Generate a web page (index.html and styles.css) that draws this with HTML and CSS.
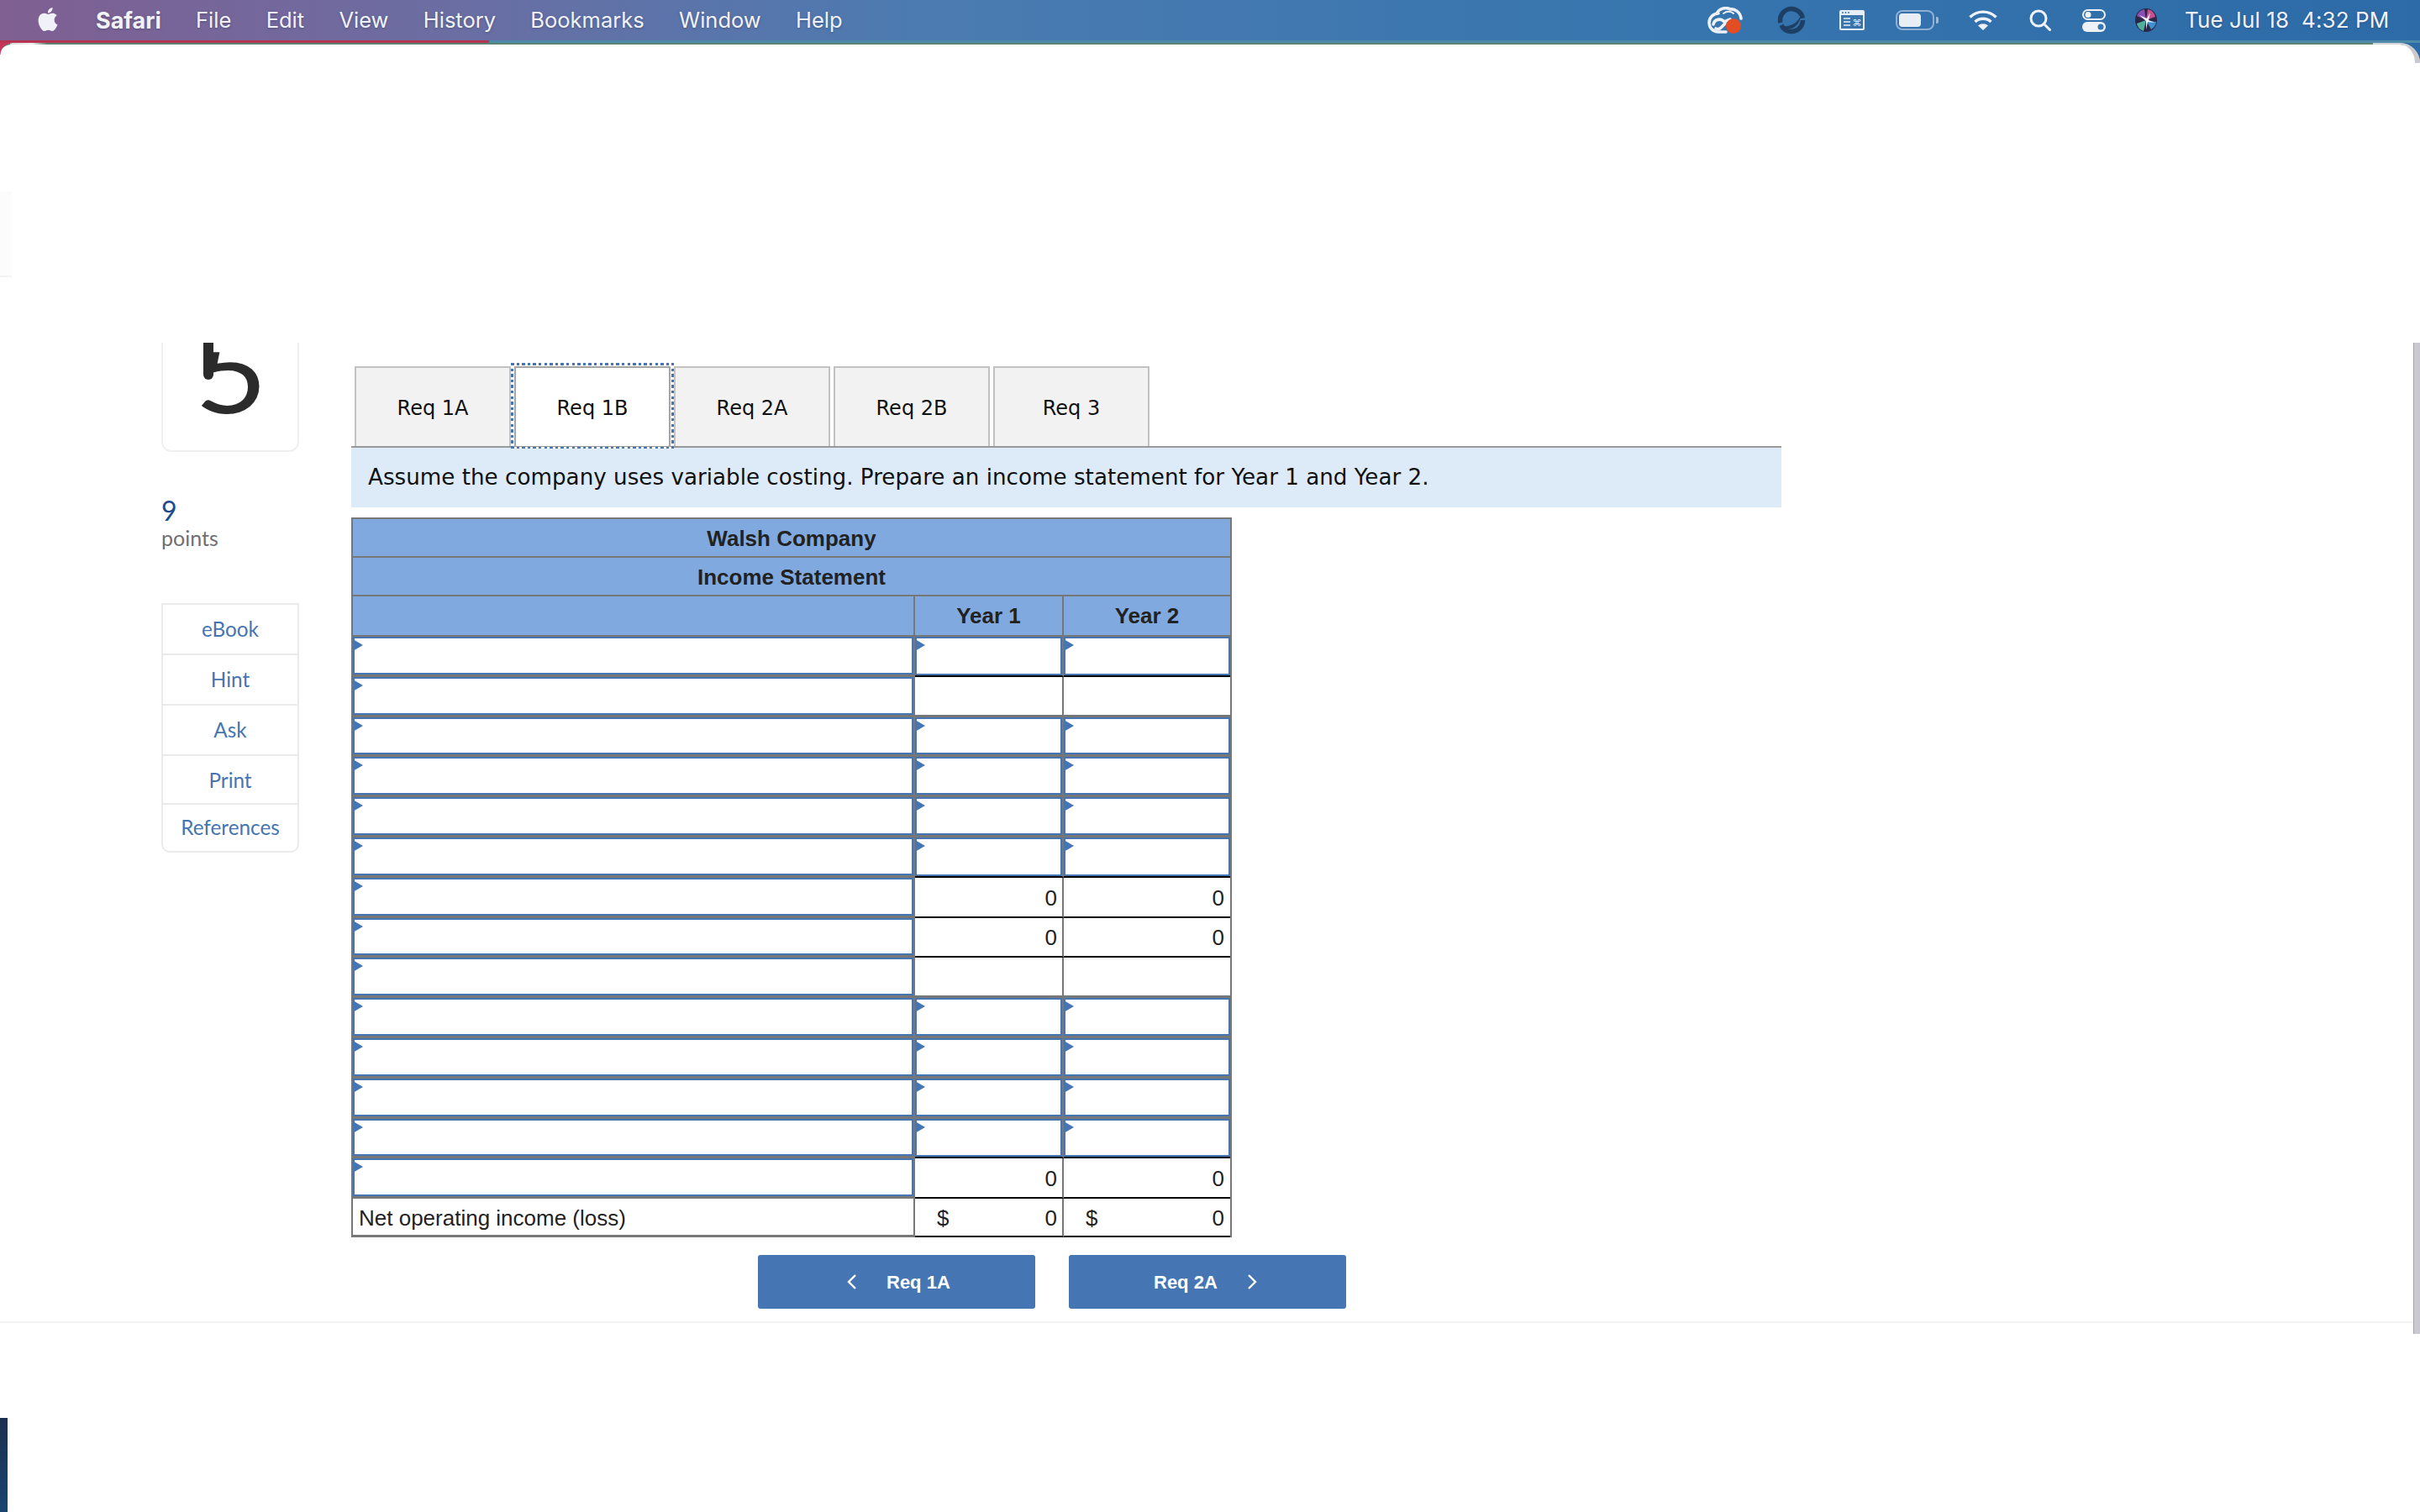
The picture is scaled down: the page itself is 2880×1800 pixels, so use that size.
FILE: index.html
```html
<!DOCTYPE html>
<html lang="en">
<head>
<meta charset="utf-8">
<title>Walsh Company</title>
<link rel="stylesheet" href="styles.css">
</head>
<body>
<div class="desktop">
  <header class="menubar">
    <svg class="apple" viewBox="0 0 24 24"><path d="M12.152 6.896c-.948 0-2.415-1.078-3.96-1.04-2.04.027-3.91 1.183-4.961 3.014-2.117 3.675-.546 9.103 1.519 12.09 1.013 1.454 2.208 3.09 3.792 3.039 1.52-.065 2.09-.987 3.935-.987 1.831 0 2.35.987 3.96.948 1.637-.026 2.676-1.48 3.676-2.948 1.156-1.688 1.636-3.325 1.662-3.415-.039-.013-3.182-1.221-3.22-4.857-.026-3.04 2.48-4.494 2.597-4.559-1.429-2.09-3.623-2.324-4.39-2.376-2-.156-3.675 1.09-4.61 1.09zM15.53 3.83c.843-1.012 1.4-2.427 1.245-3.83-1.207.052-2.662.805-3.532 1.818-.78.896-1.454 2.338-1.273 3.714 1.338.104 2.715-.688 3.559-1.701"/></svg>
    <nav class="menus">
      <span class="menu-app">Safari</span>
      <span>File</span>
      <span>Edit</span>
      <span>View</span>
      <span>History</span>
      <span>Bookmarks</span>
      <span>Window</span>
      <span>Help</span>
    </nav>
    <div class="status">
      <svg class="st-cc" viewBox="0 0 42 34">
        <path d="M13 8a10 10 0 1 0 0 22h9" class="cc"/>
        <path d="M11 8C14 2 22 0 27 3c5-1 12 3 13 11" class="cc"/>
        <path d="M19 8c4-3 9-3 12 0" class="cc-thin"/>
        <path d="M7 21c1-6 9-8 13-3l7-3" class="cc"/>
        <path d="M10 26c2 1 4 1 6-1l5-5" class="cc"/>
        <circle cx="31" cy="23" r="9" class="cc-dot"/>
      </svg>
      <svg class="st-ring" viewBox="0 0 36 36">
        <circle cx="18" cy="18" r="13.5" class="ring"/>
        <path d="M8 26c8 5 18 0 20-11-3 7-11 11-20 11z" class="ring-in"/>
      </svg>
      <svg class="st-win" viewBox="0 0 30 24">
        <rect x="0" y="0" width="30" height="24" rx="2" class="win-bg"/>
        <rect x="2" y="6" width="26" height="16" class="win-in"/>
        <circle cx="4" cy="3" r="1" class="win-dot"/><circle cx="7.5" cy="3" r="1" class="win-dot"/><circle cx="11" cy="3" r="1" class="win-dot"/>
        <path d="M5 10h8M5 14h8M5 18h8" class="win-line"/>
        <text x="21" y="18.5" class="win-cmd">⌘</text>
      </svg>
      <div class="battery"><span class="battery-body"><span class="battery-fill"></span></span><span class="battery-nub"></span></div>
      <svg class="st-wifi" viewBox="0 0 34 25">
        <path d="M1.5 9.5a22 22 0 0 1 31 0" class="wf"/>
        <path d="M7.5 15a14 14 0 0 1 19 0" class="wf"/>
        <path d="M17 25l-6-5.5a9 9 0 0 1 12 0z" class="wf-fill"/>
      </svg>
      <svg class="st-search" viewBox="0 0 26 26"><circle cx="11" cy="11" r="9" class="w3"/><path d="M17.5 17.5l7 7" class="w3"/></svg>
      <svg class="st-ctrl" viewBox="0 0 28 28">
        <rect x="1" y="1" width="26" height="11" rx="5.5" class="w2"/><circle cx="7" cy="6.5" r="3.5" class="wfill"/>
        <rect x="0" y="15" width="28" height="12" rx="6" class="wfill"/><circle cx="22" cy="21" r="3.5" class="ctrl-knob"/>
      </svg>
      <svg class="st-siri" viewBox="0 0 26 28">
        <ellipse cx="13" cy="14" rx="13" ry="14" class="siri-base"/>
        <path d="M13 14L2 9a12 12 0 0 1 9-8z" class="siri-purple"/>
        <path d="M13 14L15 1a12 12 0 0 1 9 9z" class="siri-pink"/>
        <path d="M13 14l12 2a12 12 0 0 1-6 9z" class="siri-blue"/>
        <path d="M13 14l-3 13a12 12 0 0 1-8-9z" class="siri-green"/>
        <path d="M13 15L5 8l9 4 4-7-2 9 7 3-8-1-2 9z" class="siri-star"/>
      </svg>
      <span class="clock">Tue Jul 18&nbsp;&nbsp;4:32 PM</span>
    </div>
  </header>

  <div class="edge">
    <span class="edge-red"></span><span class="edge-teal"></span>
  </div>

  <div class="window">
    <span class="ghost-box"></span>
    <span class="dark-strip"></span>
    <span class="scrollbar"></span>
    <span class="corner-right"></span>
    <div class="content">
      <aside class="side">
        <div class="qnum"><span class="qnum-digit">5</span></div>
        <div class="score">9</div>
        <div class="score-label">points</div>
        <ul class="tools">
          <li class="tool-a">eBook</li>
          <li class="tool-a">Hint</li>
          <li class="tool-a">Ask</li>
          <li class="tool-b">Print</li>
          <li class="tool-c">References</li>
        </ul>
      </aside>
      <main class="work">
        <div class="tabs">
          <button class="tab">Req 1A</button>
          <button class="tab tab-active">Req 1B</button>
          <button class="tab">Req 2A</button>
          <button class="tab">Req 2B</button>
          <button class="tab">Req 3</button>
        </div>
        <p class="prompt">Assume the company uses variable costing. Prepare an income statement for Year 1 and Year 2.</p>
        <div class="sheet">
          <div class="c head span3">Walsh Company</div>
          <div class="c head span3">Income Statement</div>
          <div class="c head"></div><div class="c head">Year 1</div><div class="c head">Year 2</div>

          <div class="c in"><i></i></div><div class="c in black"><i></i></div><div class="c in black"><i></i></div>
          <div class="c in"><i></i></div><div class="c"></div><div class="c"></div>
          <div class="c in"><i></i></div><div class="c in"><i></i></div><div class="c in"><i></i></div>
          <div class="c in"><i></i></div><div class="c in"><i></i></div><div class="c in"><i></i></div>
          <div class="c in"><i></i></div><div class="c in"><i></i></div><div class="c in"><i></i></div>
          <div class="c in"><i></i></div><div class="c in black"><i></i></div><div class="c in black"><i></i></div>
          <div class="c in"><i></i></div><div class="c num black">0</div><div class="c num black">0</div>
          <div class="c in"><i></i></div><div class="c num black">0</div><div class="c num black">0</div>
          <div class="c in"><i></i></div><div class="c"></div><div class="c"></div>
          <div class="c in"><i></i></div><div class="c in"><i></i></div><div class="c in"><i></i></div>
          <div class="c in"><i></i></div><div class="c in"><i></i></div><div class="c in"><i></i></div>
          <div class="c in"><i></i></div><div class="c in"><i></i></div><div class="c in"><i></i></div>
          <div class="c in"><i></i></div><div class="c in black"><i></i></div><div class="c in black"><i></i></div>
          <div class="c in"><i></i></div><div class="c num black">0</div><div class="c num black">0</div>
          <div class="c label">Net operating income (loss)</div>
          <div class="c money black"><span>$</span><span>0</span></div>
          <div class="c money black"><span>$</span><span>0</span></div>
        </div>
        <div class="pager">
          <button class="pg pg-prev"><svg class="chev" viewBox="0 0 12 18"><path d="M10 1L2 9l8 8"/></svg><span>Req 1A</span></button>
          <button class="pg pg-next"><span>Req 2A</span><svg class="chev" viewBox="0 0 12 18"><path d="M2 1l8 8-8 8"/></svg></button>
        </div>
      </main>
    </div>
    <div class="footline"></div>
  </div>
</div>
</body>
</html>
```
FILE: styles.css
```css
* { box-sizing: border-box; }
html, body { margin: 0; padding: 0; }
body { width: 2880px; height: 1800px; overflow: hidden; background: #fff; }

.desktop {
  width: 2880px; height: 1800px;
  display: flex; flex-direction: column;
  background: linear-gradient(90deg, #805f92 0, #6a6ea3 550px, #4b7bb1 1100px, #3675ae 2000px, #2d6ba8 2880px);
}

/* menu bar */
.menubar {
  flex: none; height: 48px; display: flex; align-items: center;
  color: #f1f2f7; font: 400 26px/1 "Inter", "Liberation Sans", sans-serif;
  text-shadow: 0 1px 3px rgba(30, 40, 70, .35);
}
.apple { width: 28px; height: 32px; margin: -2px 0 0 43px; fill: #f1f2f7; }
.menus { display: flex; gap: 41.3px; margin-left: 43px; font-size: 25.5px; }
.menu-app { font-weight: 700; font-size: 27px; }
.status { margin-left: auto; display: flex; align-items: center; height: 48px; position: relative; width: 860px; }
.status svg, .battery { position: absolute; }
.clock { position: absolute; left: 580px; top: 11px; font-size: 26px; letter-spacing: .1px; white-space: nowrap; }
.w3 { fill: none; stroke: #eef1f7; stroke-width: 3; stroke-linecap: round; }
.w2 { fill: none; stroke: #eef1f7; stroke-width: 2; }
.wfill { fill: #eef1f7; }
.cc { fill: none; stroke: #eef1f7; stroke-width: 3.6; stroke-linecap: round; }
.cc-thin { fill: none; stroke: #eef1f7; stroke-width: 2; stroke-linecap: round; }
.cc-dot { fill: #e34d23; }
.st-cc { left: 12px; top: 8px; width: 42px; height: 34px; }
.st-ring { left: 94px; top: 6px; width: 36px; height: 36px; }
.ring { fill: none; stroke: #1d3f63; stroke-width: 5.5; stroke-dasharray: 36 3 43 3; }
.ring-in { fill: #1d3f63; stroke: #1d3f63; stroke-width: 1; }
.st-win { left: 169px; top: 12px; width: 30px; height: 24px; }
.win-bg { fill: #e8eef6; }
.win-in { fill: #3a76ae; }
.win-dot { fill: #3a76ae; }
.win-line { stroke: #e8eef6; stroke-width: 1.6; }
.win-cmd { fill: #e8eef6; font: 11px "DejaVu Sans", sans-serif; text-anchor: middle; }
.battery { left: 236px; top: 12px; display: flex; align-items: center; }
.battery-body { width: 46px; height: 24px; border: 2px solid #8fb0d4; border-radius: 8px; padding: 2px; display: block; }
.battery-fill { display: block; width: 26px; height: 100%; background: #e9eef5; border-radius: 4px; }
.battery-nub { width: 3px; height: 8px; margin-left: 2px; background: #9db9d8; border-radius: 0 2px 2px 0; }
.st-wifi { left: 323px; top: 11px; width: 34px; height: 25px; }
.wf { fill: none; stroke: #eef1f7; stroke-width: 3.4; }
.wf-fill { fill: #eef1f7; }
.st-search { left: 395px; top: 11px; width: 26px; height: 26px; }
.st-ctrl { left: 458px; top: 11px; width: 28px; height: 28px; }
.ctrl-knob { fill: #3a76ae; }
.st-siri { left: 521px; top: 10px; width: 26px; height: 28px; }
.siri-base { fill: #2a2748; }
.siri-purple { fill: #8a4fb0; }
.siri-pink { fill: #c9508f; }
.siri-blue { fill: #3f8fd0; }
.siri-green { fill: #4fb0a0; }
.siri-star { fill: #f2f4ff; }

/* window edge under the menu bar */
.edge { flex: none; height: 3px; display: flex; }
.edge-red { width: 582px; background: #b5344f; }
.edge-teal { flex: 1; background: #4c8aa8; }

.window {
  flex: 1; position: relative;
  background: #fff;
  border-top: 2px solid #5c8272;
  border-radius: 14px 24px 0 0;
  padding-top: 355px;
  display: flex; flex-direction: column;
}
.window::before {
  content: ""; position: absolute; left: 12px; top: -2px; width: 44px; height: 2px;
  background: linear-gradient(90deg, #d8d8dc, #eeeeee 60%, #5c8272);
}
.window::after {
  content: ""; position: absolute; left: 0; top: -2px; width: 14px; height: 14px;
  background: radial-gradient(circle at 100% 100%, transparent 13px, #c9345a 14px);
}
.corner-right {
  position: absolute; right: 0; top: -2px; width: 56px; height: 24px;
  border-top: 2px solid #d4d4d8; border-right: 6px solid #c9c9cf;
  border-radius: 0 24px 0 0;
}
.ghost-box { position: absolute; left: 0; top: 175px; width: 14px; height: 102px; background: #fcfcfc; border-bottom: 2px solid #f3f3f3; }
.dark-strip { position: absolute; left: 0; bottom: 0; width: 9px; height: 112px; background: linear-gradient(180deg, #1a2f4f, #1a4470); }
.scrollbar { position: absolute; right: 0; top: 355px; width: 8px; height: 1180px; background: #c9c9cf; border-left: 1px solid #a3a3a8; }

.content { display: flex; padding-left: 192px; height: 1165px; flex: none; }
.footline { flex: none; height: 2px; background: #f2f2f2; margin-right: 8px; }

/* sidebar */
.side { width: 164px; flex: none; font-family: "Lato", "Liberation Sans", sans-serif; }
.qnum {
  position: relative; height: 130px; overflow: hidden;
  border: 2px solid #f0f0f0; border-top: 0; border-radius: 0 0 12px 12px;
  display: flex; justify-content: center; align-items: flex-end;
}
.qnum-digit {
  font: 400 150px/150px "Lato", sans-serif; color: #2b2b2b;
  margin: 0 0 27px 2px;
  clip-path: inset(50px 0 0 0);
  transform: scaleY(.88); transform-origin: 50% 90%;
}
.qnum::after {
  content: ""; position: absolute; left: 48px; top: 0; width: 12px; height: 44px;
  background: #2b2b2b; border-radius: 0 0 6px 6px;
}
.score { margin-top: 54px; font-size: 32px; line-height: 32px; color: #1d4a8a; }
.score-label { margin-top: 1px; font-size: 25px; line-height: 30px; color: #6f6f6f; }
.tools {
  list-style: none; margin: 63px 0 0; padding: 0;
  border: 2px solid #ebebeb; border-radius: 0 0 10px 10px;
  color: #4674b2; font-size: 24.3px; text-align: center;
}
.tools li { border-bottom: 2px solid #ebebeb; display: flex; align-items: center; justify-content: center; }
.tools li:last-child { border-bottom: 0; }
.tool-a { height: 60px; padding-bottom: 2px; }
.tool-b { height: 58px; }
.tool-c { height: 55px; padding-bottom: 2px; }

/* main column */
.work { width: 1702px; margin-left: 62px; flex: none; font-family: "DejaVu Sans", sans-serif; }
.tabs { margin-top: 28px; padding-left: 4px; display: flex; gap: 4px; height: 97px; border-bottom: 2px solid #999; }
.tab {
  position: relative;
  width: 186px; height: 95px; padding: 2px 0 0; margin: 0;
  background: #f2f2f2; color: #111;
  border: 2px solid #c2c2c2; border-bottom: 0;
  font: 400 24px/1 "DejaVu Sans", sans-serif;
}
.tab-active { background: #fff; border-color: #a5a5a5; }
.tab-active::after {
  content: ""; position: absolute; left: -6px; right: -6px; top: -6px; bottom: -3px;
  background:
    repeating-linear-gradient(90deg, #4675b4 0 3.5px, #fff 3.5px 6.6px) left top / 100% 3px no-repeat,
    repeating-linear-gradient(90deg, #4675b4 0 3.5px, #fff 3.5px 6.6px) left bottom / 100% 2px no-repeat,
    repeating-linear-gradient(180deg, #4675b4 0 3.5px, #fff 3.5px 6.6px) left top / 3px 100% no-repeat,
    repeating-linear-gradient(180deg, #4675b4 0 3.5px, #fff 3.5px 6.6px) right top / 3px 100% no-repeat;
}
.prompt {
  margin: 0; height: 71px; padding-left: 20px;
  background: #ddebf8; color: #111;
  font-size: 26.2px; line-height: 71px; white-space: nowrap;
}

/* statement grid */
.sheet {
  margin-top: 12px; width: 1048px;
  display: grid;
  grid-template-columns: 669px 177px 198px;
  grid-template-rows: 46px 46px 48px repeat(14, 47.8px) 46px;
  border: 2px solid #777; border-bottom: 0;
  font: 400 26px/1 "Liberation Sans", sans-serif; color: #222;
}
.c { border-right: 2px solid #777; border-bottom: 3px solid #777; position: relative; display: flex; align-items: center; }
.c:nth-child(3n + 2) { border-right: 0; }
.head { background: #80aadf; font-weight: 700; justify-content: center; border-bottom-width: 2px; }
.span3 { grid-column: span 3; border-right: 0; padding-top: 2px; }
.in i {
  display: block; width: 100%; height: 100%;
  border: 2px solid #4675b4; background: #fff; position: relative;
}
.in i::before {
  content: ""; position: absolute; left: -2px; top: 1px;
  border-left: 12px solid #4675b4; border-top: 7px solid transparent; border-bottom: 7px solid transparent;
}
.black { border-bottom: 2px solid #000; }
.num { justify-content: flex-end; padding: 2px 6px 0 0; }
.money { justify-content: space-between; padding: 2px 6px 0 26px; }
.c.num:nth-child(3n + 2), .c.money:nth-child(3n + 2) { padding-right: 7px; }
.label { padding: 2px 0 0 7px; }

/* pager */
.pager { margin-top: 21px; margin-left: 484px; display: flex; gap: 40px; }
.pg {
  width: 330px; height: 64px; border: 0; border-radius: 3px;
  padding: 2px 0 0;
  background: #4675b4; color: #fff;
  font: 700 22px/1 "Liberation Sans", sans-serif;
  display: flex; align-items: center; gap: 35px;
}
.pg-prev { padding-left: 106px; }
.pg-next { padding-left: 101px; }
.chev { width: 12px; height: 18px; flex: none; margin-top: -2px; fill: none; stroke: #fff; stroke-width: 2.4; }
```
